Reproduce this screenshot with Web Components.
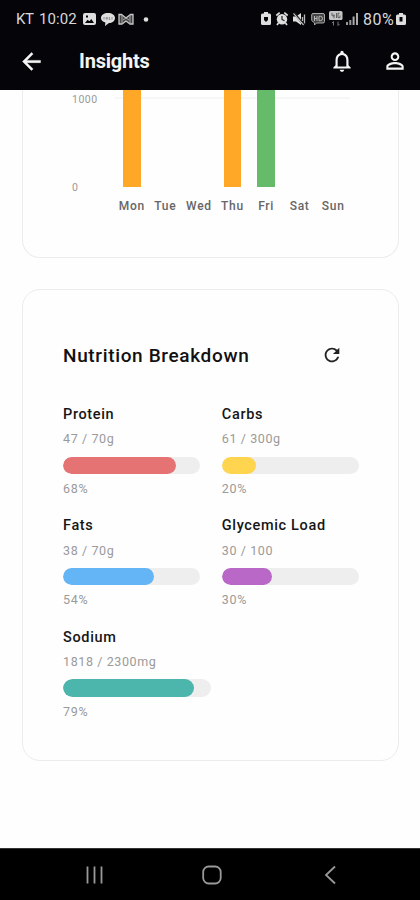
<!DOCTYPE html>
<html lang="en">
<head>
<meta charset="utf-8">
<title>Insights</title>
<style>
  body {
    margin: 0;
    background: #fefefe;
    font-family: Roboto, "Liberation Sans", sans-serif;
  }
</style>
</head>
<body>
<insights-app></insights-app>

<template id="status-bar">
  <style>
    :host {
      display: flex;
      justify-content: space-between;
      align-items: center;
      height: 38px;
      padding: 0 14px 0 16px;
      font-size: 15px;
      color: #d8d8da;
    }
    div { display: flex; align-items: center; }
    svg { display: block; overflow: visible; fill: #dededf; }
    .carrier { width: 23px; letter-spacing: -.3px; }
    .clock { width: 44px; letter-spacing: .1px; }
    .percent { font-size: 16px; letter-spacing: .4px; }
  </style>
  <div>
    <span class="carrier">KT</span>
    <span class="clock">10:02</span>
    <svg width="18" height="14" viewBox="0 0 18 14">
      <path fill-rule="evenodd" d="M2 1h9a2 2 0 0 1 2 2v8a2 2 0 0 1-2 2H2a2 2 0 0 1-2-2V3a2 2 0 0 1 2-2zM2 11h9L8.300 7 6.500 9.300 4.600 7.800zM3 3.500v2h2v-2z"/>
    </svg>
    <svg width="17" height="14" viewBox="0 0 17 14">
      <path d="M7 1c4 0 7 2 7 5s-3 5-6 5l-4 3 .4-3.400C1.500 9.800 0 8 0 6c0-3 3-5 7-5z"/>
      <path d="M3 5v2.500M5.300 7.500V5.500h1v2M8.300 5v2.500h1M11 5v2.500" fill="none" stroke="#777" stroke-width=".8"/>
    </svg>
    <svg width="26" height="14" viewBox="0 0 26 14">
      <path d="M1 12V2.500h2.500L8 6l4.500-3.500H15V12h-3L8 9l-4 3z" fill="#444" stroke="#c8c8c8" stroke-width="1.300"/>
      <path d="M4 3v9M12 3v9M5 8l3-2 3 2" fill="none" stroke="#aaa"/>
    </svg>
    <svg width="5" height="5" viewBox="0 0 5 5"><circle cx="2" cy="2.500" r="2.300"/></svg>
  </div>
  <div>
    <svg width="15" height="14" viewBox="0 0 15 14">
      <path fill-rule="evenodd" d="M3 0h4v1.500h1.500q1.500 0 1.500 1.500v8.500q0 1.500-1.500 1.500h-7Q0 13 0 11.500V3q0-1.500 1.500-1.500H3zM3 5v3l2 2 2-2V5z"/>
    </svg>
    <svg width="17" height="14" viewBox="0 0 17 14">
      <path d="M.3 3.500L3.700.7M8.300.7l3.400 2.800M2.500 11l-1.500 2M9.500 11l1.500 2" stroke="#dededf" stroke-width="1.700"/>
      <circle cx="6" cy="7.300" r="5.200"/>
      <path d="M6 4v3.500l2.500 1.300" fill="none" stroke="#222" stroke-width="1.200"/>
    </svg>
    <svg width="18" height="14" viewBox="0 0 18 14">
      <path d="M0 4.500h3L8 1v12L3 9.500H0z"/>
      <path d="M9.500 5v4M11.500 2.500v9" stroke="#bbb" stroke-width="1.300"/>
      <path d="M1 1l10 12" stroke="#222" stroke-width="2.200"/>
      <path d="M.5 1.500l10 11.500" stroke="#ddd" stroke-width="1.100"/>
    </svg>
    <svg width="18" height="14" viewBox="0 0 18 14">
      <path d="M2 1.500h10q1.500 0 1.500 1.500v6.500q0 1.500-1.500 1.500H5.500l-2 2V11L.7 8.500V3Q.7 1.500 2 1.500z" fill="#444" stroke="#aaa"/>
      <path d="M3.500 4v5M6 4v5M3.500 6.500H6M8 4.300h1.500q2 .2 2 2.200t-2 2.200H8z" fill="none" stroke="#bbb"/>
    </svg>
    <svg width="17" height="16" viewBox="0 0 17 16">
      <rect y="0" width="13.500" height="9" rx="1.500" fill="#c5c5c5"/>
      <path d="M3 1.800v3h2.500M5 3.300v4M7.500 2v5M10.500 2.200H9v4.500h2V4.500" fill="none" stroke="#555" stroke-width=".9"/>
      <path d="M4.500 14.500v-4l-1.600 1.600M9 10.500v4l1.600-1.600" fill="none" stroke="#777"/>
    </svg>
    <svg width="17" height="14" viewBox="0 0 17 14">
      <path d="M0 10h2v3H0zM3.300 8h2v5h-2z" fill="#999"/>
      <path d="M6.600 4.500h2V13h-2zM10 1h2v12h-2z" fill="#aaa"/>
    </svg>
    <span class="percent">80%</span>
    <svg width="10" height="14" viewBox="0 0 10 14" style="margin-left:2px">
      <path fill-rule="evenodd" d="M3 1h4v1.500h1.500Q10 2.500 10 4v7.500Q10 13 8.500 13h-7Q0 13 0 11.500V4q0-1.500 1.500-1.500H3zM3.500 5v4.500h3V5z"/>
    </svg>
  </div>
</template>

<template id="app-bar">
  <style>
    :host {
      display: flex;
      align-items: center;
      height: 46px;
      padding: 0 12.500px 6px 18px;
      color: #f4f4f4;
    }
    h1 {
      flex: 1;
      margin: 0 0 0 34px;
      font-size: 20px;
      font-weight: 700;
      letter-spacing: -.2px;
    }
    svg { display: block; fill: currentColor; }
    .bell { margin-right: 27px; }
  </style>
  <svg width="27" height="27" viewBox="0 0 24 24"><path stroke="currentColor" stroke-width=".4" d="M20 11H7.830l5.590-5.590L12 4l-8 8 8 8 1.410-1.410L7.830 13H20v-2z"/></svg>
  <h1><slot></slot></h1>
  <svg class="bell" width="26" height="26" viewBox="0 0 24 24"><path d="M12 22c1.100 0 2-.9 2-2h-4c0 1.100.9 2 2 2zm6-6v-5c0-3.070-1.630-5.640-4.500-6.320V4c0-.83-.67-1.500-1.500-1.500s-1.500.67-1.500 1.500v.68C7.640 5.360 6 7.920 6 11v5l-2 2v1h16v-1l-2-2zm-2 1H8v-6c0-2.480 1.510-4.500 4-4.500s4 2.020 4 4.500v6z"/></svg>
  <svg width="26" height="26" viewBox="0 0 24 24"><path d="M12 5.900c1.160 0 2.100.94 2.100 2.100s-.94 2.100-2.100 2.100S9.900 9.160 9.900 8s.94-2.100 2.100-2.100m0 9c2.970 0 6.100 1.460 6.100 2.100v1.100H5.900V17c0-.64 3.130-2.100 6.100-2.100M12 4C9.790 4 8 5.790 8 8s1.790 4 4 4 4-1.790 4-4-1.790-4-4-4zm0 9c-2.670 0-8 1.340-8 4v3h16v-3c0-2.660-5.330-4-8-4z"/></svg>
</template>

<template id="info-card">
  <style>
    :host {
      display: block;
      box-sizing: border-box;
      margin: 0 21px 0 22px;
      border: 1.500px solid #ececec;
      border-radius: 18px;
      background: #fefefe;
    }
  </style>
  <slot></slot>
</template>

<template id="week-chart">
  <style>
    :host {
      display: grid;
      grid-template-columns: 43px 235px;
      padding: 0 0 0 49px;
      height: 167px;
      grid-template-rows: 97px 1fr;
    }
    .scale {
      display: flex;
      flex-direction: column;
      justify-content: space-between;
      font-size: 10.500px;
      line-height: 14px;
      letter-spacing: .5px;
      color: #999;
      margin: 3px 0 -8px;
    }
    .plot {
      display: grid;
      grid-template-columns: repeat(7, 1fr);
      justify-items: center;
      align-items: end;
      background: linear-gradient(#f6f6f6, #f6f6f6) 0 7px / 100% 2px no-repeat;
    }
    .bar { width: 17.500px; }
    .days {
      grid-column: 2;
      display: grid;
      grid-template-columns: repeat(7, 1fr);
      justify-items: center;
      padding-top: 11px;
      font-size: 12px;
      font-weight: 500;
      line-height: 16px;
      letter-spacing: .7px;
      color: #666;
    }
  </style>
  <div class="scale"><span>1000</span><span>0</span></div>
  <div class="plot"></div>
  <div class="days"></div>
</template>

<template id="nutrient-meter">
  <style>
    :host { display: block; color: #9a9a9a; font-size: 12.500px; line-height: 20px; letter-spacing: .6px; }
    .name { color: #161616; font-size: 14.500px; font-weight: 500; letter-spacing: .65px; }
    .amount { margin-top: 4.500px; }
    .track {
      height: 17.500px;
      margin-top: 7.300px;
      border-radius: 9px;
      background: #eee;
      overflow: hidden;
    }
    .fill { height: 100%; border-radius: 9px; }
    .percent { margin-top: 5px; font-size: 12.500px; letter-spacing: .7px; }
  </style>
  <div class="name"></div>
  <div class="amount"></div>
  <div class="track"><div class="fill"></div></div>
  <div class="percent"></div>
</template>

<template id="nutrition-panel">
  <style>
    :host { display: block; padding: 50px 39.500px 37.700px 40px; }
    header { display: flex; align-items: center; justify-content: space-between; height: 30px; padding-right: 16px; }
    h2 { margin: 0; font-size: 19px; font-weight: 500; letter-spacing: .65px; color: #111; }
    svg { fill: #222; }
    .meters {
      display: grid;
      grid-template-columns: 137px 137px;
      gap: 17.100px 21.800px;
      margin-top: 34.800px;
    }
    .wide { width: 147.500px; }
  </style>
  <header>
    <h2>Nutrition Breakdown</h2>
    <svg width="22" height="22" viewBox="0 0 24 24"><path d="M17.650 6.350C16.200 4.900 14.210 4 12 4c-4.420 0-7.990 3.580-7.990 8s3.570 8 7.990 8c3.730 0 6.840-2.550 7.730-6h-2.080c-.82 2.330-3.040 4-5.650 4-3.310 0-6-2.690-6-6s2.690-6 6-6c1.660 0 3.140.69 4.220 1.780L13 11h7V4l-2.350 2.350z"/></svg>
  </header>
  <div class="meters">
    <nutrient-meter name="Protein" amount="47 / 70g" percent="68%" fill="113" color="#e57373"></nutrient-meter>
    <nutrient-meter name="Carbs" amount="61 / 300g" percent="20%" fill="34" color="#ffd54f"></nutrient-meter>
    <nutrient-meter name="Fats" amount="38 / 70g" percent="54%" fill="90.500" color="#64b5f6"></nutrient-meter>
    <nutrient-meter name="Glycemic Load" amount="30 / 100" percent="30%" fill="50.500" color="#ba68c8"></nutrient-meter>
    <nutrient-meter class="wide" name="Sodium" amount="1818 / 2300mg" percent="79%" fill="131.300" color="#4db6ac"></nutrient-meter>
  </div>
</template>

<template id="nav-bar">
  <style>
    :host {
      display: grid;
      grid-template-columns: 117px 122px 12px;
      align-items: center;
      box-sizing: border-box;
      height: 52px;
      padding-left: 85px;
      border-top: 1px solid #333;
      background: #000;
    }
    svg { fill: none; stroke: #999; stroke-width: 1.800; display: block; }
  </style>
  <svg width="19" height="20" viewBox="0 0 19 20"><path d="M2.500 1.500v17M9.500 1.500v17M16.500 1.500v17"/></svg>
  <svg width="20" height="20" viewBox="0 0 20 20"><rect x="1.200" y="1.500" width="17.500" height="17" rx="5.500"/></svg>
  <svg width="12" height="20" viewBox="0 0 12 20"><path d="M11 1.500L2 10l9 8.500"/></svg>
</template>

<template id="insights-app">
  <style>
    :host { display: flex; flex-direction: column; height: 900px; overflow: hidden; }
    .top { height: 90px; background: #050509; flex: none; }
    main { flex: 1; overflow: hidden; }
    .chart { border-top: 0; border-radius: 0 0 18px 18px; margin-bottom: 31px; }
  </style>
  <div class="top">
    <status-bar></status-bar>
    <app-bar>Insights</app-bar>
  </div>
  <main>
    <info-card class="chart"><week-chart></week-chart></info-card>
    <info-card><nutrition-panel></nutrition-panel></info-card>
  </main>
  <nav-bar></nav-bar>
</template>

<script>
  class TemplateElement extends HTMLElement {
    constructor() {
      super();
      const template = document.getElementById(this.localName);
      this.attachShadow({mode: 'open'}).appendChild(template.content.cloneNode(true));
    }
  }

  class WeekChart extends TemplateElement {
    connectedCallback() {
      const bars = { Mon: '#ffa726', Thu: '#ffa726', Fri: '#66bb6a' };
      const plot = this.shadowRoot.querySelector('.plot');
      const days = this.shadowRoot.querySelector('.days');
      for (let day of ['Mon', 'Tue', 'Wed', 'Thu', 'Fri', 'Sat', 'Sun']) {
        const bar = document.createElement('div');
        bar.className = 'bar';
        // the bars run past the top edge of the scrolled view
        bar.style.height = bars[day] ? '97px' : '0';
        bar.style.background = bars[day] || 'none';
        plot.appendChild(bar);
        const label = document.createElement('span');
        label.textContent = day;
        days.appendChild(label);
      }
    }
  }

  class NutrientMeter extends TemplateElement {
    connectedCallback() {
      for (let key of ['name', 'amount', 'percent']) {
        this.shadowRoot.querySelector('.' + key).textContent = this.getAttribute(key);
      }
      const fill = this.shadowRoot.querySelector('.fill');
      fill.style.width = this.getAttribute('fill') + 'px';
      fill.style.background = this.getAttribute('color');
    }
  }

  customElements.define('status-bar', class extends TemplateElement {});
  customElements.define('app-bar', class extends TemplateElement {});
  customElements.define('info-card', class extends TemplateElement {});
  customElements.define('week-chart', WeekChart);
  customElements.define('nutrient-meter', NutrientMeter);
  customElements.define('nutrition-panel', class extends TemplateElement {});
  customElements.define('nav-bar', class extends TemplateElement {});
  customElements.define('insights-app', class extends TemplateElement {});
</script>
</body>
</html>
